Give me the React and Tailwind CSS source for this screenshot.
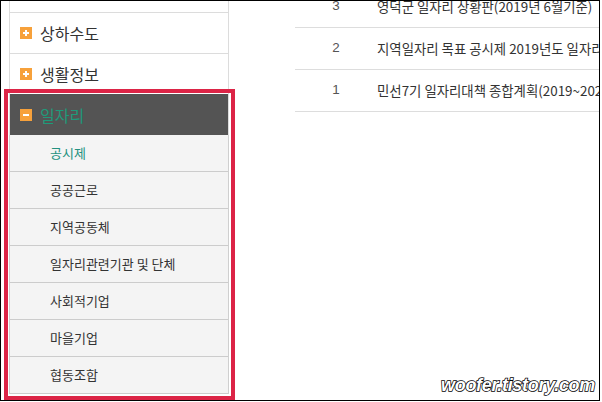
const topMenus = ['상하수도', '생활정보'];

const subMenus = [
  '공시제',
  '공공근로',
  '지역공동체',
  '일자리관련기관 및 단체',
  '사회적기업',
  '마을기업',
  '협동조합',
];

const notices = [
  { no: 3, title: '영덕군 일자리 상황판(2019년 6월기준)' },
  { no: 2, title: '지역일자리 목표 공시제 2019년도 일자리 추진계획' },
  { no: 1, title: '민선7기 일자리대책 종합계획(2019~2022)' },
];

function PlusIcon({ minus = false }) {
  return (
    <span className="relative w-[12px] h-[12px] bg-[#f7a13b] shrink-0">
      <span className="absolute left-[3px] top-[5px] w-[6px] h-[2px] bg-white" />
      {!minus && <span className="absolute left-[5px] top-[3px] w-[2px] h-[6px] bg-white" />}
    </span>
  );
}

export default function App() {
  return (
    <div className="relative w-[602px] h-[402px] bg-white overflow-hidden font-['Noto_Sans_CJK_KR','Noto_Sans',sans-serif]">
      <div className="w-[600px] h-[401px] border border-black flex overflow-hidden">
        {/* Sidebar */}
        <div className="ml-[8px] w-[220px] shrink-0 flex flex-col">
          <div className="h-[11px] border-x border-[#dcdcdc]" />
          {topMenus.map((m) => (
            <div
              key={m}
              className="h-[41px] border-x border-t border-[#dcdcdc] flex items-center gap-[8px] pl-[10px] text-[16px] text-[#333]"
            >
              <PlusIcon />
              <span className="leading-none">{m}</span>
            </div>
          ))}
          <div className="h-[41px] bg-[#545454] border-x border-[#dcdcdc] flex items-center gap-[8px] pl-[10px] text-[16px] text-[#1f9a7a]">
            <PlusIcon minus />
            <span className="leading-none">일자리</span>
          </div>
          <div className="bg-[#f4f4f4] border-x border-[#cfcfcf]">
            {subMenus.map((s, i) => (
              <div
                key={s}
                className={`h-[37px] border-b border-[#cccccc] flex items-center pl-[40px] text-[13px] ${
                  i === 0 ? 'text-[#23917f]' : 'text-[#333]'
                }`}
              >
                {s}
              </div>
            ))}
          </div>
        </div>

        {/* Board list */}
        <div className="ml-[66px] flex-1 -mt-[15px] min-w-0">
          {notices.map((n) => (
            <div key={n.no} className="h-[42px] border-b border-[#dddddd] flex items-center text-[13.4px] whitespace-nowrap">
              <span className="w-[82px] shrink-0 text-center text-[#555] font-['Liberation_Sans',sans-serif]">{n.no}</span>
              <span className="text-[#333]">{n.title}</span>
            </div>
          ))}
        </div>
      </div>

      {/* Highlight box */}
      <div className="absolute left-[4px] top-[89px] w-[231px] h-[311px] border-4 border-[#dc2446]" />

      {/* Watermark */}
      <div className="absolute right-[7px] bottom-[8px] text-[18px] leading-none font-bold italic text-white tracking-[-0.3px] font-['Liberation_Sans',sans-serif] [-webkit-text-stroke:1.5px_#000] [paint-order:stroke_fill]">
        woofer.tistory.com
      </div>
    </div>
  );
}
